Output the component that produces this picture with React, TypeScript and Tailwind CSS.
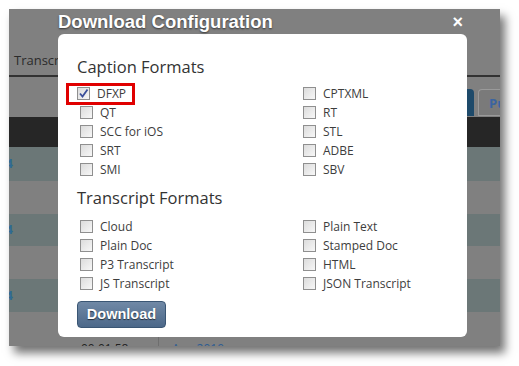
import React from 'react'

const caption = [
  ['DFXP', 'CPTXML'],
  ['QT', 'RT'],
  ['SCC for iOS', 'STL'],
  ['SRT', 'ADBE'],
  ['SMI', 'SBV'],
]

const transcript = [
  ['Cloud', 'Plain Text'],
  ['Plain Doc', 'Stamped Doc'],
  ['P3 Transcript', 'HTML'],
  ['JS Transcript', 'JSON Transcript'],
]

export default function App() {
  return (
    <div className="w-[519px] h-[366px] bg-white overflow-hidden pt-[9px] pl-[9px]">
      <div className="relative w-[491px] h-[337px] bg-[#808080] overflow-hidden shadow-[5px_7px_9px_rgba(0,0,0,0.55)] font-['Open_Sans',sans-serif]">
        {/* page behind the overlay */}
        <div className="h-[66px] flex items-end pb-[5px] pl-[5px] text-[13px] text-[#2b2b2b]">Transcripts</div>
        <div className="h-[2px] bg-[#323232]" />
        <div className="h-[40px] flex items-end justify-end gap-[4px] pb-px">
          <div className="w-[60px] h-[27px] bg-[#1e4a6a] rounded-tr-[4px]" />
          <div className="w-[22px] h-[27px] overflow-hidden whitespace-nowrap bg-[#7a7a7a] border border-[#9a9a9a] border-r-0 rounded-tl-[4px] pl-[10px] pt-[4px] text-[13px] font-bold text-[#3a64a0]">Pu</div>
        </div>
        <div className="h-[30px] bg-[#262626]" />
        <Row teal h="h-[34px]" link="4" />
        <Row h="h-[33px]" />
        <Row teal h="h-[32px]" link="4" />
        <Row h="h-[33px]" />
        <Row teal h="h-[33px]" link="4" />
        <div className="h-[34px] flex relative">
          <div className="w-[150px] border-r border-[#6e6e6e] pl-[72px] pt-[31px] text-[12px] text-[#222] leading-none">00:01:58</div>
          <div className="pl-[13px] pt-[31px] text-[12px] text-[#2d5c93] leading-none">Aug 2010</div>
        </div>

        {/* dialog */}
        <div className="absolute left-[49px] top-0 w-[409px]">
          <div className="h-[25px] flex items-center justify-between pr-[4px]">
            <span className="font-['Liberation_Sans',sans-serif] font-bold text-[18.5px] text-white leading-none pt-[1px] [text-shadow:0_1px_2px_rgba(0,0,0,0.6)]">Download Configuration</span>
            <span className="font-['Liberation_Sans',sans-serif] font-bold text-[18px] text-white leading-none">×</span>
          </div>
          <div className="h-[303px] bg-white rounded-[6px] pt-[23px] pl-[19px] text-[#444]">
            <h2 className="text-[16.5px] leading-[20px] text-[#333] mb-[7px]">Caption Formats</h2>
            <Grid rows={caption} checked="DFXP" />
            <h2 className="text-[16.5px] leading-[20px] text-[#333] mt-[9px] mb-[9px]">Transcript Formats</h2>
            <Grid rows={transcript} />
            <button className="mt-[8px] w-[89px] h-[27px] rounded-[4px] border border-[#3a5674] bg-gradient-to-b from-[#7089a6] to-[#4c6889] text-white font-['Liberation_Sans',sans-serif] font-bold text-[14.5px] [text-shadow:0_1px_1px_rgba(0,0,0,0.6)]">
              Download
            </button>
          </div>
        </div>
      </div>
    </div>
  )
}

function Row({ teal, h, link }: { teal?: boolean; h: string; link?: string }) {
  return (
    <div className={`${h} ${teal ? 'bg-[#6b7777]' : 'bg-[#808080]'} flex items-center text-[12px] font-bold text-[#2f6a94]`}>
      {link && <span className="-ml-[3px]">{link}</span>}
    </div>
  )
}

function Grid({ rows, checked }: { rows: string[][]; checked?: string }) {
  return (
    <div className="flex flex-col">
      {rows.map(([a, b]) => (
        <div key={a} className="flex h-[19px] items-center">
          <div className="w-[226px] pl-[3px]">
            <Item label={a} checked={a === checked} />
          </div>
          <Item label={b} />
        </div>
      ))}
    </div>
  )
}

function Item({ label, checked }: { label: string; checked?: boolean }) {
  const box = (
    <div className="flex items-center gap-[7px]">
      <div className="w-[13px] h-[13px] border border-[#8f8f8f] bg-gradient-to-br from-[#dcdcdc] to-[#f7f7f7] flex items-center justify-center">
        {checked && (
          <svg width="11" height="11" viewBox="0 0 11 11">
            <path d="M2 5.5 L4.5 8.5 L9.5 1.5" fill="none" stroke="#3b4f9a" strokeWidth="1.8" />
          </svg>
        )}
      </div>
      <span className="text-[12px] leading-none text-[#3d3d3d]">{label}</span>
    </div>
  )
  if (!checked) return box
  return (
    <div className="-ml-[14px] -my-[3px] w-[69px] h-[22px] border-[3px] border-[#e00000] flex items-center pl-[8px]">
      {box}
    </div>
  )
}
